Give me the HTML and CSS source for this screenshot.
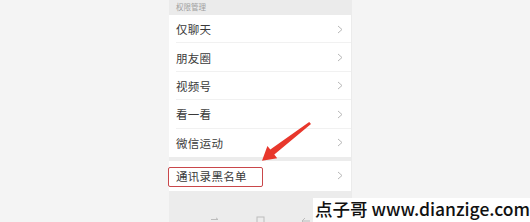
FILE: index.html
```html
<!DOCTYPE html>
<html lang="zh-CN">
<head>
<meta charset="utf-8">
<link rel="stylesheet" href="styles.css">
</head>
<body>
<div class="page">
  <div class="panel">
    <div class="header">权限管理</div>
    <div class="group">
      <div class="row"><span class="label">仅聊天</span><svg class="chev" width="6" height="9" viewBox="0 0 6 9"><polyline points="1,1 5,4.5 1,8" fill="none" stroke="#b8b8b8" stroke-width="1"/></svg></div>
      <div class="row"><span class="label">朋友圈</span><svg class="chev" width="6" height="9" viewBox="0 0 6 9"><polyline points="1,1 5,4.5 1,8" fill="none" stroke="#b8b8b8" stroke-width="1"/></svg></div>
      <div class="row"><span class="label">视频号</span><svg class="chev" width="6" height="9" viewBox="0 0 6 9"><polyline points="1,1 5,4.5 1,8" fill="none" stroke="#b8b8b8" stroke-width="1"/></svg></div>
      <div class="row"><span class="label">看一看</span><svg class="chev" width="6" height="9" viewBox="0 0 6 9"><polyline points="1,1 5,4.5 1,8" fill="none" stroke="#b8b8b8" stroke-width="1"/></svg></div>
      <div class="row last"><span class="label">微信运动</span><svg class="chev" width="6" height="9" viewBox="0 0 6 9"><polyline points="1,1 5,4.5 1,8" fill="none" stroke="#b8b8b8" stroke-width="1"/></svg></div>
    </div>
    <div class="group second">
      <div class="row tall"><span class="label">通讯录黑名单</span><svg class="chev" width="6" height="9" viewBox="0 0 6 9"><polyline points="1,1 5,4.5 1,8" fill="none" stroke="#b8b8b8" stroke-width="1"/></svg><span class="highlight"></span></div>
    </div>
    <div class="nav">
      <svg class="nav-icon" width="10" height="8" viewBox="0 0 10 8"><path d="M1 2.5h7M6 0.8l2 1.7M9 5.5h-7M4 7.2l-2-1.7" fill="none" stroke="#bcbcbc" stroke-width="1"/></svg>
      <svg class="nav-icon" width="9" height="9" viewBox="0 0 9 9"><rect x="1" y="1" width="7" height="7" fill="none" stroke="#bcbcbc" stroke-width="1"/></svg>
      <svg class="nav-icon" width="10" height="8" viewBox="0 0 10 8"><path d="M9 4H1.5M4 1L1 4l3 3" fill="none" stroke="#bcbcbc" stroke-width="1"/></svg>
    </div>
  </div>
  <svg class="arrow" width="530" height="222" viewBox="0 0 530 222"><polygon points="309.2,122 311,124 274.3,154.6 277.2,158.2 262,160.8 267.4,146 270.3,149.6" fill="#e8372c"/></svg>
  <div class="watermark">点子哥 www.dianzige.com</div>
</div>
</body>
</html>
```

FILE: styles.css
```css
html, body {
  margin: 0;
  padding: 0;
}
body {
  background: #f4f4f4;
  font-family: "Noto Sans CJK SC", "Noto Sans", sans-serif;
}
.page {
  position: relative;
  width: 530px;
  height: 222px;
  overflow: hidden;
  padding-left: 169px;
  box-sizing: border-box;
}
.panel {
  width: 182px;
  height: 222px;
  background: #ececec;
  display: flex;
  flex-direction: column;
  border-right: 1px solid #ebebeb;
}
.header {
  height: 15px;
  line-height: 14px;
  font-size: 7.5px;
  color: #a0a0a0;
  padding-left: 7px;
  background: #ebebeb;
}
.group {
  background: #fff;
  display: flex;
  flex-direction: column;
}
.second {
  margin-top: 4px;
}
.row {
  position: relative;
  height: 28.4px;
  display: flex;
  align-items: center;
  justify-content: space-between;
  padding-left: 7px;
  padding-right: 8px;
  box-sizing: border-box;
}
.row::after {
  content: "";
  position: absolute;
  left: 7px;
  right: 0;
  bottom: 0;
  height: 1px;
  background: #f1f1f1;
}
.row.last::after,
.row.tall::after {
  display: none;
}
.row.tall {
  height: 30px;
}
.label {
  font-size: 11.5px;
  color: #3a3a3a;
  letter-spacing: 0.3px;
}
.chev {
  display: block;
}
.highlight {
  position: absolute;
  left: -1px;
  top: 6px;
  width: 95px;
  height: 20px;
  border: 1.5px solid #c9474a;
  border-radius: 2px;
  box-sizing: border-box;
}
.nav {
  flex: 1;
  display: flex;
  align-items: flex-end;
  padding-left: 41px;
  gap: 36px;
  position: relative;
  top: 3px;
}
.nav-icon {
  display: block;
}
.arrow {
  position: absolute;
  left: 0;
  top: 0;
}
.watermark {
  position: absolute;
  left: 313px;
  top: 198px;
  right: 0;
  bottom: 0;
  background: #fff;
  font-size: 17.5px;
  font-weight: 500;
  line-height: 22px;
  color: #111;
  padding-left: 2px;
  white-space: nowrap;
}
```
